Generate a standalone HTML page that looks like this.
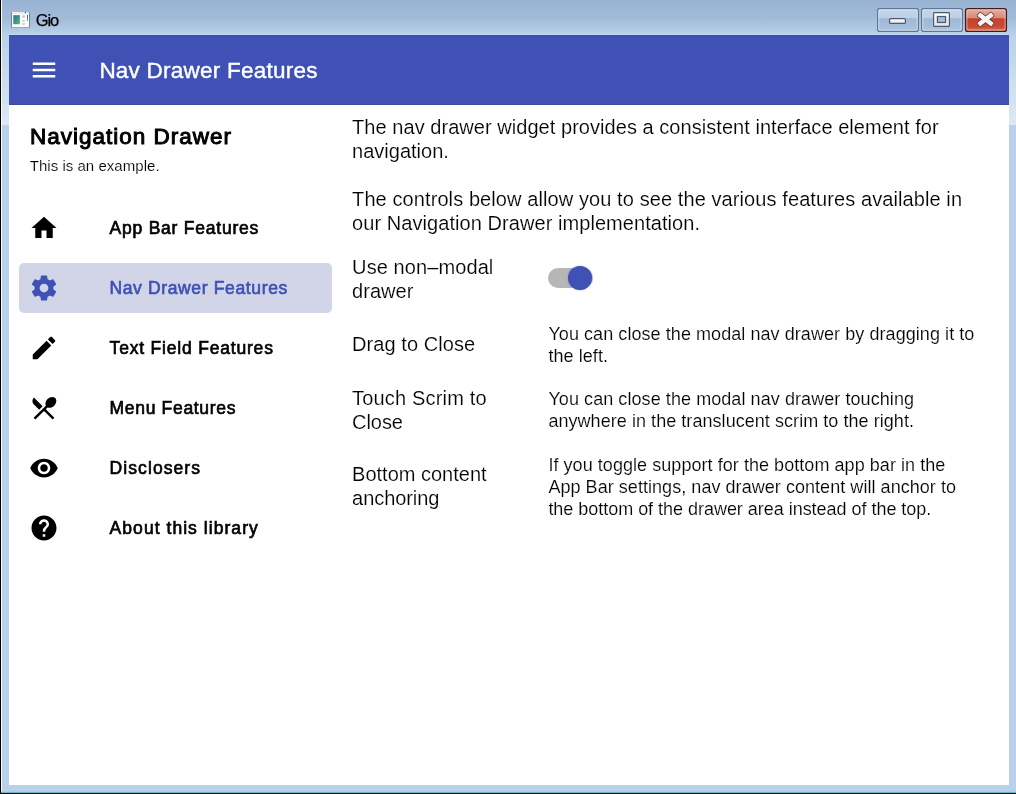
<!DOCTYPE html>
<html>
<head>
<meta charset="utf-8">
<title>Gio</title>
<style>
html,body{margin:0;padding:0;}
body{width:1016px;height:794px;overflow:hidden;position:relative;background:#b9d1ea;font-family:"Liberation Sans",sans-serif;}
.abs{position:absolute;}
.t{position:absolute;white-space:pre;line-height:1;}
#frame{position:absolute;left:0;top:0;width:1016px;height:794px;background:#b9d1ea;}
#cap{position:absolute;left:0;top:0;width:1016px;height:35px;background:linear-gradient(to bottom,#99b4d2 0%,#a0bad8 50%,#b9d1ea 100%);}
#lb{position:absolute;left:0;top:0;width:1px;height:794px;background:#000;}
#lw{position:absolute;left:1px;top:0;width:1px;height:792px;background:#fafeff;}
#bc{position:absolute;left:1px;top:791px;width:1015px;height:3px;background:linear-gradient(to bottom,#b8d5ec 0%,#9fd0e2 30%,#6fb4c6 50%,#0a1c26 72%,#000810 100%);}
#bb{display:none;}
#client{position:absolute;left:9px;top:35px;width:1000px;height:750px;background:#fff;overflow:hidden;}
#appbar{position:absolute;left:0;top:0;width:1000px;height:70px;background:linear-gradient(to bottom,#38489c 0,#3d4eae 1px,#3f51b5 1.6px,#3f51b5 68.6px,#3b4790 69.3px,#4c589e 70px);}
.btn{position:absolute;top:8px;height:23px;border-radius:3px;box-sizing:border-box;}
.ic{position:absolute;width:30px;height:30px;}
#txt{position:absolute;left:0;top:0;width:1016px;height:794px;will-change:transform;}
</style>
</head>
<body>
<div id="frame"></div>
<div id="cap"></div>
<div class="abs" style="left:2px;top:35px;width:7px;height:90px;background:linear-gradient(to bottom,#b9d1ea,#dde9f5);"></div>
<div class="abs" style="left:1009px;top:35px;width:7px;height:90px;background:linear-gradient(to bottom,#b9d1ea,#dde9f5);"></div>
<div class="abs" style="left:9px;top:34px;width:1000px;height:1px;background:#c4d8f4;"></div>
<div id="lb"></div><div id="lw"></div><div id="bc"></div><div id="bb"></div>

<!-- window icon -->
<svg class="abs" style="left:8px;top:8px" width="26" height="22" viewBox="8 8 26 22">
 <defs>
  <linearGradient id="gi" x1="0" y1="0" x2="1" y2="1"><stop offset="0" stop-color="#3a6c9c"/><stop offset=".45" stop-color="#3f8f86"/><stop offset="1" stop-color="#5fb87a"/></linearGradient>
  <linearGradient id="gv" x1="0" y1="0" x2="0" y2="1"><stop offset="0" stop-color="#2f4858"/><stop offset="1" stop-color="#5e9468"/></linearGradient>
 </defs>
 <rect x="11" y="12" width="19" height="15.4" rx=".5" fill="#64748f"/>
 <rect x="11.9" y="12" width="17.2" height="15" fill="#fbfdfd"/>
 <rect x="11.9" y="12" width="17.2" height="2.1" fill="#e3e6ea"/>
 <rect x="12.4" y="12.5" width="12" height=".7" fill="#f7f8fa"/>
 <rect x="24.9" y="12" width="1.1" height="1.1" fill="#4a566a"/>
 <rect x="11.5" y="27" width="18" height=".6" fill="#9fb0c8" opacity=".8"/>
 <rect x="13.3" y="15.3" width="6.6" height="8.9" fill="url(#gi)"/>
 <rect x="13.3" y="15.3" width="6.6" height=".8" fill="#4f7fa8" opacity=".8"/>
 <rect x="22.1" y="15.3" width="2.7" height="2.4" fill="#c6c6c6"/>
 <rect x="22.1" y="20.2" width="2.7" height="1.5" fill="#c6c6c6"/>
 <rect x="22.1" y="23.2" width="2.7" height="1.6" fill="#c6c6c6"/>
 <rect x="27" y="15" width=".9" height="5.9" fill="url(#gv)"/>
</svg>

<!-- caption buttons -->
<svg class="abs" style="left:870px;top:0px" width="146" height="40" viewBox="870 0 146 40">
 <defs>
  <linearGradient id="gb" x1="0" y1="0" x2="0" y2="1">
   <stop offset="0" stop-color="#c4d6ea"/><stop offset="0.42" stop-color="#bccfe6"/><stop offset="0.44" stop-color="#9db7d5"/><stop offset="1" stop-color="#acc4df"/>
  </linearGradient>
  <linearGradient id="gr" x1="0" y1="0" x2="0" y2="1">
   <stop offset="0" stop-color="#e8ad9f"/><stop offset="0.42" stop-color="#d98876"/><stop offset="0.44" stop-color="#c4412a"/><stop offset="0.8" stop-color="#c84c33"/><stop offset="1" stop-color="#d97a5e"/>
  </linearGradient>
  <linearGradient id="gw" x1="0" y1="0" x2="0" y2="1">
   <stop offset="0" stop-color="#ffffff"/><stop offset="1" stop-color="#e4e4e4"/>
  </linearGradient>
 </defs>
 <rect x="877.6" y="8.6" width="40.8" height="22.8" rx="2.2" fill="url(#gb)" stroke="#5f7592" stroke-width="1.2"/>
 <rect x="878.8" y="9.8" width="38.4" height="20.4" rx="1.3" fill="none" stroke="#dbe7f5" stroke-opacity=".75" stroke-width="1"/>
 <rect x="921.6" y="8.6" width="40.8" height="22.8" rx="2.2" fill="url(#gb)" stroke="#5f7592" stroke-width="1.2"/>
 <rect x="922.8" y="9.8" width="38.4" height="20.4" rx="1.3" fill="none" stroke="#dbe7f5" stroke-opacity=".75" stroke-width="1"/>
 <rect x="965.6" y="8.6" width="40.8" height="22.8" rx="2.2" fill="url(#gr)" stroke="#3f1a20" stroke-width="1.3"/>
 <rect x="966.9" y="9.9" width="38.2" height="20.2" rx="1.3" fill="none" stroke="#f6cfc4" stroke-opacity=".7" stroke-width="1"/>
 <!-- minimize glyph -->
 <rect x="889.6" y="18.6" width="15.8" height="4.8" rx="1" fill="url(#gw)" stroke="#4d5b70" stroke-width="1.2"/>
 <!-- maximize glyph -->
 <path fill-rule="evenodd" d="M934.4 12.7 h14.2 a.8 .8 0 0 1 .8 .8 v12 a.8 .8 0 0 1 -.8 .8 h-14.2 a.8 .8 0 0 1 -.8 -.8 v-12 a.8 .8 0 0 1 .8 -.8 z M937.5 16.5 v6 h8 v-6 z" fill="url(#gw)" stroke="#4d5b70" stroke-width="1.2"/>
 <rect x="937.5" y="16.5" width="8" height="6" fill="#a3bcd9" stroke="#4d5b70" stroke-width="1.2"/>
 <!-- close glyph -->
 <g transform="translate(985.55 19.35)">
  <g fill="#fff" stroke="#55262a" stroke-width="1.3" stroke-linejoin="round">
   <rect x="-8.7" y="-2.2" width="17.4" height="4.4" rx=".3" transform="rotate(38)"/>
   <rect x="-8.7" y="-2.2" width="17.4" height="4.4" rx=".3" transform="rotate(-38)"/>
  </g>
  <g fill="url(#gw)">
   <rect x="-8.7" y="-2.2" width="17.4" height="4.4" rx=".3" transform="rotate(38)" fill="#f6f6f6"/>
   <rect x="-8.7" y="-2.2" width="17.4" height="4.4" rx=".3" transform="rotate(-38)" fill="#f6f6f6"/>
  </g>
 </g>
</svg>

<div id="client">
 <div id="appbar"></div>
 <!-- hamburger -->
 <svg class="ic" style="left:20px;top:19.7px" viewBox="0 0 24 24"><path fill="#fff" d="M3 18h18v-2H3v2zm0-5h18v-2H3v2zm0-7v2h18V6H3z"/></svg>

 <!-- selected bg -->
 <div class="abs" style="left:10px;top:228px;width:313px;height:49.7px;border-radius:5px;background:#d2d4e8;"></div>

 <!-- nav icons -->
 <svg class="ic" style="left:20px;top:178px" viewBox="0 0 24 24"><path d="M10 20v-6h4v6h5v-8h3L12 3 2 12h3v8z"/></svg>
 <svg class="ic" style="left:20px;top:238px" viewBox="0 0 24 24"><path fill="#3f51b5" d="M19.43 12.98c.04-.32.07-.64.07-.98s-.03-.66-.07-.98l2.11-1.65c.19-.15.24-.42.12-.64l-2-3.46c-.12-.22-.39-.3-.61-.22l-2.49 1c-.52-.4-1.08-.73-1.69-.98l-.38-2.65C14.46 2.18 14.25 2 14 2h-4c-.25 0-.46.18-.49.42l-.38 2.65c-.61.25-1.17.59-1.69.98l-2.49-1c-.23-.09-.49 0-.61.22l-2 3.46c-.13.22-.07.49.12.64l2.11 1.65c-.04.32-.07.65-.07.98s.03.66.07.98l-2.11 1.65c-.19.15-.24.42-.12.64l2 3.46c.12.22.39.3.61.22l2.49-1c.52.4 1.08.73 1.69.98l.38 2.65c.03.24.24.42.49.42h4c.25 0 .46-.18.49-.42l.38-2.65c.61-.25 1.17-.59 1.69-.98l2.49 1c.23.09.49 0 .61-.22l2-3.46c.12-.22.07-.49-.12-.64l-2.11-1.65zM12 15.500c-1.93 0-3.500-1.570-3.500-3.500s1.570-3.500 3.500-3.500 3.500 1.570 3.500 3.500-1.570 3.500-3.500 3.500z"/></svg>
 <svg class="ic" style="left:20px;top:298px" viewBox="0 0 24 24"><path d="M3 17.25V21h3.750L17.810 9.940l-3.750-3.750L3 17.250zM20.710 7.040c.39-.39.39-1.020 0-1.410l-2.340-2.340c-.39-.39-1.020-.39-1.410 0l-1.830 1.830 3.750 3.750 1.830-1.830z"/></svg>
 <svg class="ic" style="left:20px;top:358px" viewBox="0 0 24 24"><path d="M8.100 13.340l2.830-2.830L3.910 3.500c-1.560 1.560-1.560 4.090 0 5.660l4.190 4.180zm6.780-1.810c1.530.71 3.680.21 5.270-1.380 1.910-1.910 2.280-4.650.81-6.120-1.460-1.460-4.200-1.100-6.120.81-1.590 1.590-2.090 3.740-1.380 5.270L3.700 19.870l1.410 1.410L12 14.410l6.880 6.880 1.410-1.410L13.410 13l1.470-1.470z"/></svg>
 <svg class="ic" style="left:20px;top:418px" viewBox="0 0 24 24"><path d="M12 4.500C7 4.500 2.730 7.610 1 12c1.730 4.390 6 7.500 11 7.500s9.270-3.110 11-7.500c-1.730-4.390-6-7.500-11-7.500zM12 17c-2.760 0-5-2.240-5-5s2.240-5 5-5 5 2.240 5 5-2.240 5-5 5zm0-8c-1.660 0-3 1.340-3 3s1.340 3 3 3 3-1.340 3-3-1.340-3-3-3z"/></svg>
 <svg class="ic" style="left:20px;top:478px" viewBox="0 0 24 24"><path d="M12 2C6.480 2 2 6.480 2 12s4.480 10 10 10 10-4.480 10-10S17.520 2 12 2zm1 17h-2v-2h2v2zm2.070-7.750l-.9.920C13.450 12.900 13 13.500 13 15h-2v-.5c0-1.100.45-2.100 1.170-2.830l1.240-1.260c.37-.36.590-.86.590-1.410 0-1.100-.9-2-2-2s-2 .9-2 2H8c0-2.210 1.790-4 4-4s4 1.790 4 4c0 .88-.36 1.680-.93 2.250z"/></svg>

 <!-- switch -->
 <div class="abs" style="left:539px;top:233.2px;width:45px;height:19.4px;border-radius:10px;background:#b6b6b6;"></div>
 <div class="abs" style="left:559.1px;top:230.8px;width:24.3px;height:24.3px;border-radius:50%;background:#3f51b5;box-shadow:0 0 1.5px rgba(63,81,181,.6);"></div>
</div>

<!-- text layer (page coordinates) -->
<div id="txt">
<span class="t" style="left:35.8px;top:11.83px;font-size:16.5px;font-weight:400;color:#000;letter-spacing:-1.144px;-webkit-text-stroke:0.25px #000;">Gio</span>
<span class="t" style="left:99.4px;top:59.75px;font-size:22.5px;font-weight:400;color:#fff;letter-spacing:0.232px;-webkit-text-stroke:0.4px #fff;">Nav Drawer Features</span>
<span class="t" style="left:30px;top:126.25px;font-size:22.5px;font-weight:400;color:#000;letter-spacing:0.995px;-webkit-text-stroke:1px currentColor;">Navigation Drawer</span>
<span class="t" style="left:29.7px;top:158.3px;font-size:15px;font-weight:400;color:#000;letter-spacing:0.037px;-webkit-text-stroke:0.16px #fff;">This is an example.</span>
<span class="t" style="left:109.6px;top:219.89px;font-size:17.5px;font-weight:400;color:#000;letter-spacing:0.77px;-webkit-text-stroke:0.66px currentColor;">App Bar Features</span>
<span class="t" style="left:109.4px;top:279.89px;font-size:17.5px;font-weight:400;color:#3f51b5;letter-spacing:0.644px;-webkit-text-stroke:0.66px currentColor;">Nav Drawer Features</span>
<span class="t" style="left:109.6px;top:339.89px;font-size:17.5px;font-weight:400;color:#000;letter-spacing:0.805px;-webkit-text-stroke:0.66px currentColor;">Text Field Features</span>
<span class="t" style="left:109.6px;top:399.89px;font-size:17.5px;font-weight:400;color:#000;letter-spacing:0.675px;-webkit-text-stroke:0.66px currentColor;">Menu Features</span>
<span class="t" style="left:109.6px;top:459.89px;font-size:17.5px;font-weight:400;color:#000;letter-spacing:1.076px;-webkit-text-stroke:0.66px currentColor;">Disclosers</span>
<span class="t" style="left:109.6px;top:519.89px;font-size:17.5px;font-weight:400;color:#000;letter-spacing:1.05px;-webkit-text-stroke:0.66px currentColor;">About this library</span>
<span class="t" style="left:352.1px;top:117.07px;font-size:20px;font-weight:400;color:#000;letter-spacing:0.046px;-webkit-text-stroke:0.16px #fff;">The nav drawer widget provides a consistent interface element for</span>
<span class="t" style="left:352.1px;top:141.07px;font-size:20px;font-weight:400;color:#000;letter-spacing:0.005px;-webkit-text-stroke:0.16px #fff;">navigation.</span>
<span class="t" style="left:352.1px;top:188.57px;font-size:20px;font-weight:400;color:#000;letter-spacing:0.092px;-webkit-text-stroke:0.16px #fff;">The controls below allow you to see the various features available in</span>
<span class="t" style="left:352.1px;top:212.57px;font-size:20px;font-weight:400;color:#000;letter-spacing:0.061px;-webkit-text-stroke:0.16px #fff;">our Navigation Drawer implementation.</span>
<span class="t" style="left:352.1px;top:256.57px;font-size:20px;font-weight:400;color:#000;letter-spacing:0.092px;-webkit-text-stroke:0.16px #fff;">Use non–modal</span>
<span class="t" style="left:352.1px;top:280.67px;font-size:20px;font-weight:400;color:#000;letter-spacing:0.032px;-webkit-text-stroke:0.16px #fff;">drawer</span>
<span class="t" style="left:352.1px;top:333.67px;font-size:20px;font-weight:400;color:#000;letter-spacing:0.068px;-webkit-text-stroke:0.16px #fff;">Drag to Close</span>
<span class="t" style="left:352.1px;top:387.77px;font-size:20px;font-weight:400;color:#000;letter-spacing:0.172px;-webkit-text-stroke:0.16px #fff;">Touch Scrim to</span>
<span class="t" style="left:352.1px;top:412.17px;font-size:20px;font-weight:400;color:#000;letter-spacing:-0.06px;-webkit-text-stroke:0.16px #fff;">Close</span>
<span class="t" style="left:352.1px;top:464.27px;font-size:20px;font-weight:400;color:#000;letter-spacing:-0.002px;-webkit-text-stroke:0.16px #fff;">Bottom content</span>
<span class="t" style="left:352.1px;top:488.27px;font-size:20px;font-weight:400;color:#000;letter-spacing:-0.068px;-webkit-text-stroke:0.16px #fff;">anchoring</span>
<span class="t" style="left:548.4px;top:324.76px;font-size:18px;font-weight:400;color:#000;letter-spacing:0.066px;-webkit-text-stroke:0.16px #fff;">You can close the modal nav drawer by dragging it to</span>
<span class="t" style="left:548.4px;top:346.76px;font-size:18px;font-weight:400;color:#000;letter-spacing:0.069px;-webkit-text-stroke:0.16px #fff;">the left.</span>
<span class="t" style="left:548.4px;top:389.96px;font-size:18px;font-weight:400;color:#000;letter-spacing:0.072px;-webkit-text-stroke:0.16px #fff;">You can close the modal nav drawer touching</span>
<span class="t" style="left:548.4px;top:411.86px;font-size:18px;font-weight:400;color:#000;letter-spacing:0.052px;-webkit-text-stroke:0.16px #fff;">anywhere in the translucent scrim to the right.</span>
<span class="t" style="left:548.4px;top:455.56px;font-size:18px;font-weight:400;color:#000;letter-spacing:0.053px;-webkit-text-stroke:0.16px #fff;">If you toggle support for the bottom app bar in the</span>
<span class="t" style="left:548.4px;top:477.56px;font-size:18px;font-weight:400;color:#000;letter-spacing:0.048px;-webkit-text-stroke:0.16px #fff;">App Bar settings, nav drawer content will anchor to</span>
<span class="t" style="left:548.4px;top:500.06px;font-size:18px;font-weight:400;color:#000;letter-spacing:-0.028px;-webkit-text-stroke:0.16px #fff;">the bottom of the drawer area instead of the top.</span>
</div>
</body>
</html>
